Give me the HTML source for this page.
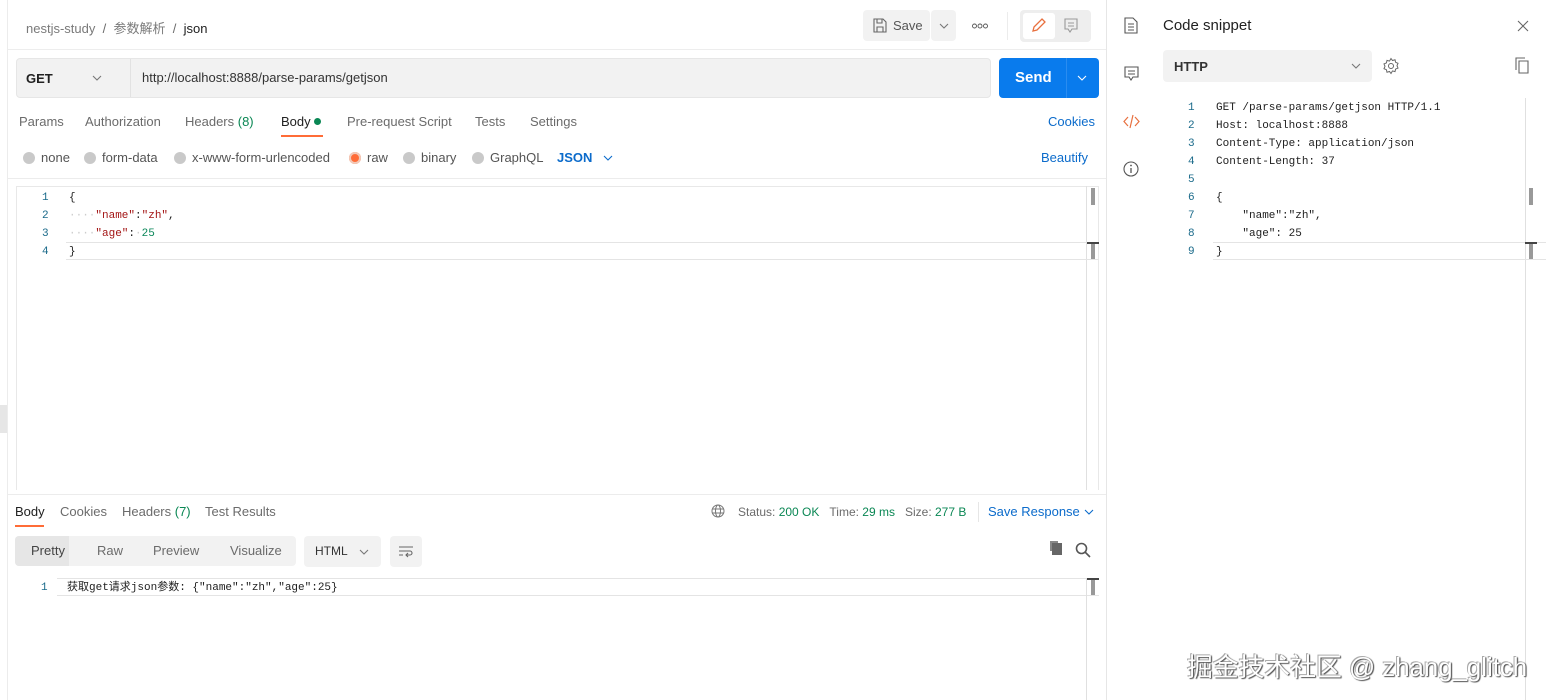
<!DOCTYPE html>
<html><head><meta charset="utf-8"><style>
*{margin:0;padding:0;box-sizing:border-box}
body{width:1546px;height:700px;overflow:hidden;background:#fff;font-family:"Liberation Sans","Noto Sans CJK SC",sans-serif;font-size:13px;color:#212121;position:relative}
.a{position:absolute;white-space:nowrap}
.g{color:#6b6b6b}
.mono{font-family:"Liberation Mono","Noto Sans CJK SC",monospace;font-size:11px}
.ln{color:#1a6a8a}
.rad{display:inline-block;width:12px;height:12px;border-radius:50%;background:#c9c9c9;vertical-align:-2px;margin-right:6px}
.grn{color:#0a8754}
.blue{color:#0b6bcb}
</style></head><body>
<svg width="0" height="0" style="position:absolute"><defs><path id="chev" d="M1 1l4 4 4-4" fill="none" stroke-width="1.1"/></defs></svg>
<div class="a" style="left:7px;top:0;width:1px;height:700px;background:#ececec"></div>
<div class="a" style="left:0;top:405px;width:7px;height:28px;background:#e6e6e6"></div>
<div class="a" style="left:8px;top:49px;width:1099px;height:1px;background:#ededed"></div>
<div class="a" style="left:26px;top:18px;font-size:13px"><span style="color:#7a7a7a">nestjs-study</span> <span class="g">&nbsp;/&nbsp;</span> <span style="color:#7a7a7a">参数解析</span> <span class="g">&nbsp;/&nbsp;</span> <span>json</span></div>
<div class="a" style="left:863px;top:10px;width:67px;height:31px;background:#f2f2f2;border-radius:4px"></div>
<svg class="a" style="left:873px;top:18px" width="14" height="15" viewBox="0 0 14 15"><path d="M1 1h9l3 3v10H1z M4 1v4h5V1 M4 14V9h6v5" fill="none" stroke="#666" stroke-width="1.1"/></svg>
<div class="a" style="left:893px;top:18px;color:#555">Save</div>
<div class="a" style="left:931px;top:10px;width:25px;height:31px;background:#f2f2f2;border-radius:4px"></div>
<svg class="a" style="left:939px;top:23px" width="10" height="7"><use href="#chev" stroke="#777"/></svg>
<svg class="a" style="left:972px;top:23px" width="16" height="6" viewBox="0 0 16 6"><circle cx="2.5" cy="3" r="2" fill="none" stroke="#555" stroke-width="0.9"/><circle cx="8" cy="3" r="2" fill="none" stroke="#555" stroke-width="0.9"/><circle cx="13.5" cy="3" r="2" fill="none" stroke="#555" stroke-width="0.9"/></svg>
<div class="a" style="left:1007px;top:12px;width:1px;height:28px;background:#ececec"></div>
<div class="a" style="left:1020px;top:10px;width:71px;height:32px;background:#eeeeee;border-radius:4px"></div>
<div class="a" style="left:1023px;top:13px;width:32px;height:26px;background:#fff;border-radius:3px"></div>
<svg class="a" style="left:1031px;top:17px" width="16" height="17" viewBox="0 0 16 17"><path d="M11 2l3 3-8 8-4 1 1-4z" fill="none" stroke="#e8703f" stroke-width="1.3"/></svg>
<svg class="a" style="left:1063px;top:17px" width="16" height="17" viewBox="0 0 16 17"><path d="M2 2h12v10H9l-2 3-2-3H2z M5 6h6 M5 9h6" fill="none" stroke="#999" stroke-width="1.1"/></svg>
<div class="a" style="left:16px;top:58px;width:975px;height:40px;background:#f2f2f2;border:1px solid #e6e6e6;border-radius:4px"></div>
<div class="a" style="left:130px;top:59px;width:1px;height:38px;background:#e2e2e2"></div>
<div class="a" style="left:26px;top:71px;font-weight:bold;font-size:13px;color:#212121">GET</div>
<svg class="a" style="left:92px;top:75px" width="10" height="7"><use href="#chev" stroke="#777"/></svg>
<div class="a" style="left:142px;top:70px;color:#333">http://localhost:8888/parse-params/getjson</div>
<div class="a" style="left:999px;top:58px;width:100px;height:40px;background:#097bed;border-radius:4px"></div>
<div class="a" style="left:1066px;top:58px;width:1px;height:40px;background:#2a8cf0"></div>
<div class="a" style="left:1015px;top:69px;color:#fff;font-weight:bold;font-size:15px">Send</div>
<svg class="a" style="left:1077px;top:75px" width="10" height="7"><use href="#chev" stroke="#fff"/></svg>
<div class="a g" style="left:19px;top:114px">Params</div>
<div class="a g" style="left:85px;top:114px">Authorization</div>
<div class="a g" style="left:185px;top:114px">Headers <span class="grn">(8)</span></div>
<div class="a" style="left:281px;top:114px">Body <span style="display:inline-block;width:7px;height:7px;border-radius:50%;background:#0a8754;vertical-align:1px"></span></div>
<div class="a" style="left:281px;top:135px;width:42px;height:2px;background:#ff6c37"></div>
<div class="a g" style="left:347px;top:114px">Pre-request Script</div>
<div class="a g" style="left:475px;top:114px">Tests</div>
<div class="a g" style="left:530px;top:114px">Settings</div>
<div class="a blue" style="left:1048px;top:114px">Cookies</div>
<div class="a" style="left:23px;top:150px;color:#555"><span class="rad"></span>none</div>
<div class="a" style="left:84px;top:150px;color:#555"><span class="rad"></span>form-data</div>
<div class="a" style="left:174px;top:150px;color:#555"><span class="rad"></span>x-www-form-urlencoded</div>
<div class="a" style="left:349px;top:150px;color:#555"><span class="rad" style="background:#ff6c37;box-shadow:inset 0 0 0 2px #f2c9b8"></span>raw</div>
<div class="a" style="left:403px;top:150px;color:#555"><span class="rad"></span>binary</div>
<div class="a" style="left:472px;top:150px;color:#555"><span class="rad"></span>GraphQL</div>
<div class="a blue" style="left:557px;top:150px;font-weight:bold">JSON</div>
<svg class="a" style="left:603px;top:155px" width="10" height="7"><use href="#chev" stroke="#0b6bcb"/></svg>
<div class="a blue" style="left:1041px;top:150px">Beautify</div>
<div class="a" style="left:8px;top:178px;width:1099px;height:1px;background:#ececec"></div>
<div class="a" style="left:16px;top:186px;width:1083px;height:304px;border:1px solid #e8e8e8;border-bottom:none"></div>
<div class="a" style="left:1086px;top:186px;width:1px;height:304px;background:#e0e0e0"></div>
<div class="a" style="left:1091px;top:188px;width:4px;height:17px;background:#999"></div>
<div class="a" style="left:66px;top:242px;width:1033px;height:18px;border-top:1px solid #e4e4e4;border-bottom:1px solid #e4e4e4"></div>
<div class="a" style="left:1087px;top:242px;width:12px;height:2px;background:#444"></div>
<div class="a" style="left:1091px;top:244px;width:4px;height:15px;background:#999"></div>
<div class="a mono ln" style="left:42px;top:189px;line-height:18px;text-align:right">1<br>2<br>3<br>4</div>
<div class="a mono" style="left:69px;top:189px;line-height:18px;color:#212121">{<br><span style="color:#ccc">····</span><span style="color:#a31515">"name"</span>:<span style="color:#a31515">"zh"</span>,<br><span style="color:#ccc">····</span><span style="color:#a31515">"age"</span>:<span style="color:#ccc">·</span><span style="color:#098658">25</span><br>}</div>
<div class="a" style="left:8px;top:494px;width:1099px;height:1px;background:#ececec"></div>
<div class="a" style="left:15px;top:504px">Body</div>
<div class="a" style="left:15px;top:525px;width:29px;height:2px;background:#ff6c37"></div>
<div class="a g" style="left:60px;top:504px">Cookies</div>
<div class="a g" style="left:122px;top:504px">Headers <span class="grn">(7)</span></div>
<div class="a g" style="left:205px;top:504px">Test Results</div>
<svg class="a" style="left:711px;top:504px" width="14" height="14" viewBox="0 0 14 14"><circle cx="7" cy="7" r="6" fill="none" stroke="#777"/><ellipse cx="7" cy="7" rx="2.5" ry="6" fill="none" stroke="#777"/><path d="M1 5h12M1 9h12" stroke="#777"/></svg>
<div class="a g" style="left:738px;top:505px;font-size:12px">Status: <span class="grn">200 OK</span>&nbsp;&nbsp;&nbsp;Time: <span class="grn">29 ms</span>&nbsp;&nbsp;&nbsp;Size: <span class="grn">277 B</span></div>
<div class="a" style="left:978px;top:502px;width:1px;height:20px;background:#e6e6e6"></div>
<div class="a blue" style="left:988px;top:504px">Save Response</div>
<svg class="a" style="left:1084px;top:509px" width="10" height="7"><use href="#chev" stroke="#0b6bcb"/></svg>
<div class="a" style="left:15px;top:536px;width:281px;height:30px;background:#f2f2f2;border-radius:4px"></div>
<div class="a" style="left:15px;top:536px;width:54px;height:30px;background:#e6e6e6;border-radius:4px 0 0 4px"></div>
<div class="a" style="left:31px;top:543px;color:#444">Pretty</div>
<div class="a g" style="left:97px;top:543px">Raw</div>
<div class="a g" style="left:153px;top:543px">Preview</div>
<div class="a g" style="left:230px;top:543px">Visualize</div>
<div class="a" style="left:304px;top:536px;width:77px;height:31px;background:#f2f2f2;border-radius:4px"></div>
<div class="a" style="left:315px;top:544px;font-size:12px;color:#333">HTML</div>
<svg class="a" style="left:359px;top:549px" width="10" height="7"><use href="#chev" stroke="#777"/></svg>
<div class="a" style="left:390px;top:536px;width:32px;height:31px;background:#f2f2f2;border-radius:4px"></div>
<svg class="a" style="left:398px;top:544px" width="16" height="15" viewBox="0 0 16 15"><path d="M1 3h14M1 7h11a2 2 0 010 4H8M10 9l-2 2 2 2M1 11h4" fill="none" stroke="#666" stroke-width="1.1"/></svg>
<div class="a" style="left:1052px;top:543px;width:10px;height:12px;background:#666;box-shadow:-3px -3px 0 -1px #888"></div>
<svg class="a" style="left:1075px;top:542px" width="16" height="16" viewBox="0 0 16 16"><circle cx="6.5" cy="6.5" r="5" fill="none" stroke="#555" stroke-width="1.6"/><path d="M10 10l5 5" stroke="#555" stroke-width="1.6"/></svg>
<div class="a" style="left:57px;top:578px;width:1042px;height:18px;border-top:1px solid #e4e4e4;border-bottom:1px solid #e4e4e4"></div>
<div class="a" style="left:1086px;top:578px;width:1px;height:122px;background:#e0e0e0"></div>
<div class="a" style="left:1087px;top:578px;width:12px;height:2px;background:#444"></div>
<div class="a" style="left:1091px;top:580px;width:4px;height:15px;background:#999"></div>
<div class="a mono ln" style="left:41px;top:580px;line-height:16px">1</div>
<div class="a mono" style="left:67px;top:580px;line-height:16px;color:#212121">获取get请求json参数: {"name":"zh","age":25}</div>
<div class="a" style="left:1106px;top:0;width:1px;height:700px;background:#e6e6e6"></div>
<svg class="a" style="left:1124px;top:17px" width="14" height="17" viewBox="0 0 14 17"><path d="M1 1h8l4 4v11H1z M4 7h6M4 10h6M4 13h6" fill="none" stroke="#555" stroke-width="1.1"/></svg>
<svg class="a" style="left:1124px;top:66px" width="15" height="16" viewBox="0 0 15 16"><path d="M1 1h13v10H9l-2 3-2-3H1z M4 5h7M4 8h7" fill="none" stroke="#555" stroke-width="1.1"/></svg>
<svg class="a" style="left:1123px;top:114px" width="17" height="15" viewBox="0 0 17 15"><path d="M5 3L1 7.5 5 12M12 3l4 4.5-4 4.5M10 1L7 14" fill="none" stroke="#e8703f" stroke-width="1.2"/></svg>
<svg class="a" style="left:1123px;top:161px" width="16" height="16" viewBox="0 0 16 16"><circle cx="8" cy="8" r="7" fill="none" stroke="#555" stroke-width="1.1"/><path d="M8 7v5" stroke="#555" stroke-width="1.3"/><circle cx="8" cy="4.5" r="0.9" fill="#555"/></svg>
<div class="a" style="left:1163px;top:17px;font-size:15px;color:#212121">Code snippet</div>
<svg class="a" style="left:1517px;top:20px" width="12" height="12" viewBox="0 0 12 12"><path d="M1 1l10 10M11 1L1 11" stroke="#666" stroke-width="1.1"/></svg>
<div class="a" style="left:1163px;top:50px;width:209px;height:32px;background:#f2f2f2;border-radius:4px"></div>
<div class="a" style="left:1174px;top:59px;font-weight:bold;font-size:13px;color:#333">HTTP</div>
<svg class="a" style="left:1351px;top:63px" width="10" height="7"><use href="#chev" stroke="#777"/></svg>
<svg class="a" style="left:1382px;top:57px" width="18" height="18" viewBox="0 0 18 18"><circle cx="9" cy="9" r="2.5" fill="none" stroke="#666"/><path d="M9 1.5l1.5 2 2.5-.7.6 2.5 2.4 1-1 2.4 1 2.4-2.4 1-.6 2.5-2.5-.7L9 16.5l-1.5-2-2.5.7-.6-2.5-2.4-1 1-2.4-1-2.4 2.4-1 .6-2.5 2.5.7z" fill="none" stroke="#666"/></svg>
<svg class="a" style="left:1515px;top:57px" width="15" height="17" viewBox="0 0 15 17"><path d="M4 4h9v12H4z M1 13V1h9" fill="none" stroke="#666" stroke-width="1.1"/></svg>
<div class="a" style="left:1525px;top:98px;width:1px;height:602px;background:#e0e0e0"></div>
<div class="a" style="left:1529px;top:188px;width:4px;height:17px;background:#999"></div>
<div class="a" style="left:1213px;top:242px;width:333px;height:18px;border-top:1px solid #e4e4e4;border-bottom:1px solid #e4e4e4"></div>
<div class="a" style="left:1525px;top:242px;width:12px;height:2px;background:#444"></div>
<div class="a" style="left:1529px;top:244px;width:4px;height:15px;background:#999"></div>
<div class="a mono ln" style="left:1188px;top:99px;line-height:18px">1<br>2<br>3<br>4<br>5<br>6<br>7<br>8<br>9</div>
<div class="a mono" style="left:1216px;top:99px;line-height:18px;color:#212121">GET /parse-params/getjson HTTP/1.1<br>Host: localhost:8888<br>Content-Type: application/json<br>Content-Length: 37<br>&nbsp;<br>{<br>&nbsp;&nbsp;&nbsp;&nbsp;"name":"zh",<br>&nbsp;&nbsp;&nbsp;&nbsp;"age": 25<br>}</div>
<div class="a" style="left:1187px;top:647px;font-size:25.8px;color:#fff;text-shadow:1px 1px 1px #555,-1px -1px 0 #aaa,1px 0 1px #777">掘金技术社区 @ zhang_glitch</div>
</body></html>
